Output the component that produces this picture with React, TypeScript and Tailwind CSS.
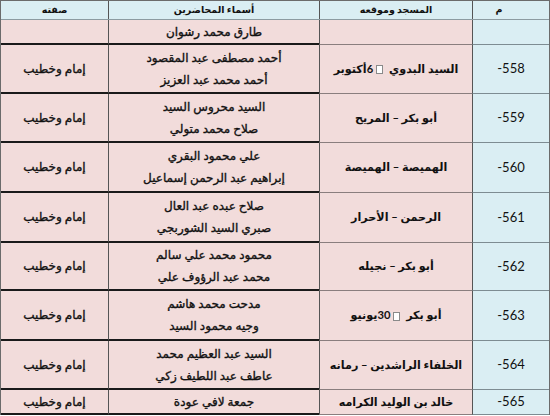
type Row = {
  num: string;
  mosque: React.ReactNode;
  names: string[];
  role: string;
  h: string;
};

const Box = () => (
  <span className="mx-[3px] inline-block h-[9px] w-[7px] border border-[#8a8a8a] bg-white align-middle" />
);

const rows: Row[] = [
  { num: "", mosque: "", names: ["طارق محمد رشوان"], role: "", h: "h-[25px]" },
  {
    num: "-558",
    mosque: (
      <>
        السيد البدوي <Box />6أكتوبر
      </>
    ),
    names: ["أحمد مصطفى عبد المقصود", "أحمد محمد عبد العزيز"],
    role: "إمام وخطيب",
    h: "h-[49px]",
  },
  {
    num: "-559",
    mosque: "أبو بكر – المريح",
    names: ["السيد محروس السيد", "صلاح محمد متولي"],
    role: "إمام وخطيب",
    h: "h-[49px]",
  },
  {
    num: "-560",
    mosque: "الهميصة – الهميصة",
    names: ["علي محمود البقري", "إبراهيم عبد الرحمن إسماعيل"],
    role: "إمام وخطيب",
    h: "h-[50px]",
  },
  {
    num: "-561",
    mosque: "الرحمن – الأحرار",
    names: ["صلاح عبده عبد العال", "صبري السيد الشوربجي"],
    role: "إمام وخطيب",
    h: "h-[50px]",
  },
  {
    num: "-562",
    mosque: "أبو بكر – نجيله",
    names: ["محمود محمد علي سالم", "محمد عبد الرؤوف علي"],
    role: "إمام وخطيب",
    h: "h-[48px]",
  },
  {
    num: "-563",
    mosque: (
      <>
        أبو بكر <Box />30يونيو
      </>
    ),
    names: ["مدحت محمد هاشم", "وجيه محمود السيد"],
    role: "إمام وخطيب",
    h: "h-[50px]",
  },
  {
    num: "-564",
    mosque: "الخلفاء الراشدين – رمانه",
    names: ["السيد عبد العظيم محمد", "عاطف عبد اللطيف زكي"],
    role: "إمام وخطيب",
    h: "h-[49px]",
  },
  {
    num: "-565",
    mosque: "خالد بن الوليد الكرامه",
    names: ["جمعة لافي عودة"],
    role: "إمام وخطيب",
    h: "h-[25px]",
  },
];

export default function App() {
  return (
    <div
      dir="rtl"
      className="h-[416px] w-[550px] overflow-hidden bg-white font-['Lato','DejaVu_Sans',sans-serif] text-[#111]"
    >
      <div className="border-t border-r border-l border-[#6b6b6b]">
        {/* header */}
        <div className="flex h-[19px] border-b border-[#8c9ba1] bg-[#daeef3] text-[9.5px] font-bold">
          <div className="flex w-[77px] items-center justify-center border-l border-[#555] pr-[24px]">
            م
          </div>
          <div className="flex w-[153px] items-center justify-center border-l border-[#555]">
            المسجد وموقعه
          </div>
          <div className="flex w-[211px] items-center justify-center border-l border-[#555]">
            أسماء المحاضرين
          </div>
          <div className="flex flex-1 items-center justify-center">صفته</div>
        </div>

        {rows.map((r, i) => (
          <div key={i} className={`flex ${r.h}`}>
            <div
              dir="ltr"
              className="flex w-[77px] items-center justify-center border-b border-l border-[#7d8c92] border-l-[#555] bg-[#daeef3] text-[13px]"
            >
              {r.num}
            </div>
            <div className="flex w-[153px] items-center justify-center whitespace-nowrap border-b border-l border-[#8a7e7e] border-l-[#555] bg-[#f2dcdb] text-[11.2px] font-bold">
              <span>{r.mosque}</span>
            </div>
            <div className="flex w-[211px] flex-col items-center justify-center gap-[4px] whitespace-nowrap border-b-2 border-l border-b-[#1a1a1a] border-l-[#555] bg-[#f2dcdb] text-[12px] leading-[18px] [-webkit-text-stroke:0.35px_#111]">
              {r.names.map((n, j) => (
                <span key={j}>{n}</span>
              ))}
            </div>
            <div className="flex flex-1 items-center justify-center border-b-2 border-b-[#1a1a1a] bg-[#f2dcdb] text-[12px] [-webkit-text-stroke:0.35px_#111]">
              {r.role}
            </div>
          </div>
        ))}
      </div>
    </div>
  );
}
